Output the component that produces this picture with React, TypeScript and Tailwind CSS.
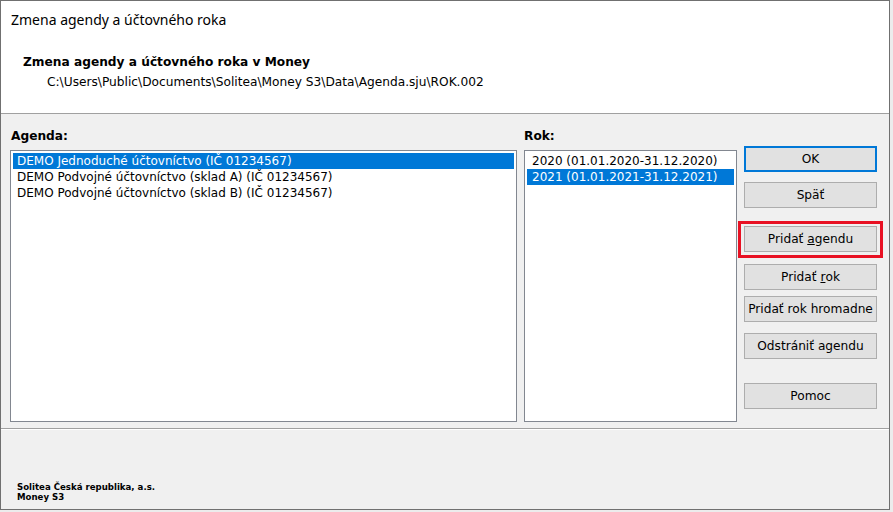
import React from "react";

const agendy = [
  "DEMO Jednoduché účtovníctvo (IČ 01234567)",
  "DEMO Podvojné účtovníctvo (sklad A) (IČ 01234567)",
  "DEMO Podvojné účtovníctvo (sklad B) (IČ 01234567)",
];

const roky = [
  "2020 (01.01.2020-31.12.2020)",
  "2021 (01.01.2021-31.12.2021)",
];

const Btn = ({ children, def = false, className = "" }: { children: React.ReactNode; def?: boolean; className?: string }) => {
  return (
    <button
      type="button"
      className={
        "w-[133px] h-[26px] flex items-center justify-center bg-[#e1e1e1] text-[12.2px] text-black leading-none " +
        (def ? "border-2 border-[#0078d7] " : "border border-[#adadad] ") +
        className
      }
    >
      {children}
    </button>
  );
};

const App = () => {
  const selAgenda = 0;
  const selRok = 1;

  return (
    <div className="w-[893px] h-[512px] bg-[#ececec] overflow-hidden" style={{ fontFamily: '"DejaVu Sans", Tahoma, sans-serif' }}>
      <div className="w-[890px] h-[510px] border border-[#707070] flex flex-col bg-[#f0f0f0]">
        {/* header */}
        <div className="h-[113px] bg-white border-b border-[#a0a0a0] shrink-0">
          <div className="pl-[10px] pt-[9px] text-[14px] leading-[20px] text-black" style={{ fontFamily: '"Noto Sans", "Open Sans", sans-serif' }}>
            Zmena agendy a účtovného roka
          </div>
          <div className="pl-[22px] pt-[23px] text-[12.2px] font-bold leading-[18px] text-black">
            Zmena agendy a účtovného roka v Money
          </div>
          <div className="pl-[46px] pt-[3px] text-[12.2px] leading-[17px] text-black">
            C:\Users\Public\Documents\Solitea\Money S3\Data\Agenda.sju\ROK.002
          </div>
        </div>

        {/* main */}
        <div className="h-[315px] flex shrink-0 border-b border-[#a0a0a0]">
          <div className="ml-[9px] w-[507px] flex flex-col">
            <div className="pt-[14px] h-[36px] text-[12.2px] font-bold leading-[16px] pl-[1px]">Agenda:</div>
            <div className="h-[272px] bg-white border border-[#828790] p-[2px]">
              {agendy.map((a, i) => (
                <div
                  key={i}
                  className={
                    "h-[16px] leading-[16px] pl-[4px] text-[12px] whitespace-nowrap " +
                    (i === selAgenda ? "bg-[#0078d7] text-white" : "text-black")
                  }
                >
                  {a}
                </div>
              ))}
            </div>
          </div>

          <div className="ml-[7px] w-[213px] flex flex-col">
            <div className="pt-[14px] h-[36px] text-[12.2px] font-bold leading-[16px]">Rok:</div>
            <div className="h-[272px] bg-white border border-[#828790] p-[2px]">
              {roky.map((r, i) => (
                <div
                  key={i}
                  className={
                    "h-[16px] leading-[16px] pl-[5px] text-[12px] whitespace-nowrap " +
                    (i === selRok ? "bg-[#0078d7] text-white" : "text-black")
                  }
                >
                  {r}
                </div>
              ))}
            </div>
          </div>

          <div className="ml-[7px] w-[133px] flex flex-col pt-[32px]">
            <Btn def>OK</Btn>
            <Btn className="mt-[10px]">Späť</Btn>
            <div className="mt-[13px] -mx-[6px] border-[3px] border-[#e81123] pt-[2px] pb-[3px] px-[3px]">
              <Btn>
                Pridať&nbsp;<span className="underline">a</span>gendu
              </Btn>
            </div>
            <Btn className="mt-[6px]">
              Pridať&nbsp;<span className="underline">r</span>ok
            </Btn>
            <Btn className="mt-[6px]">Pridať rok hromadne</Btn>
            <Btn className="mt-[11px]">Odstrániť agendu</Btn>
            <Btn className="mt-[24px]">Pomoc</Btn>
          </div>
        </div>

        {/* footer */}
        <div className="flex-1 border-t border-white flex flex-col justify-end pb-[7px] pl-[16px]">
          <div className="text-[8.6px] font-bold leading-[10px] text-black">Solitea Česká republika, a.s.</div>
          <div className="text-[8.6px] font-bold leading-[10px] text-black">Money S3</div>
        </div>
      </div>
    </div>
  );
};

export default App;
